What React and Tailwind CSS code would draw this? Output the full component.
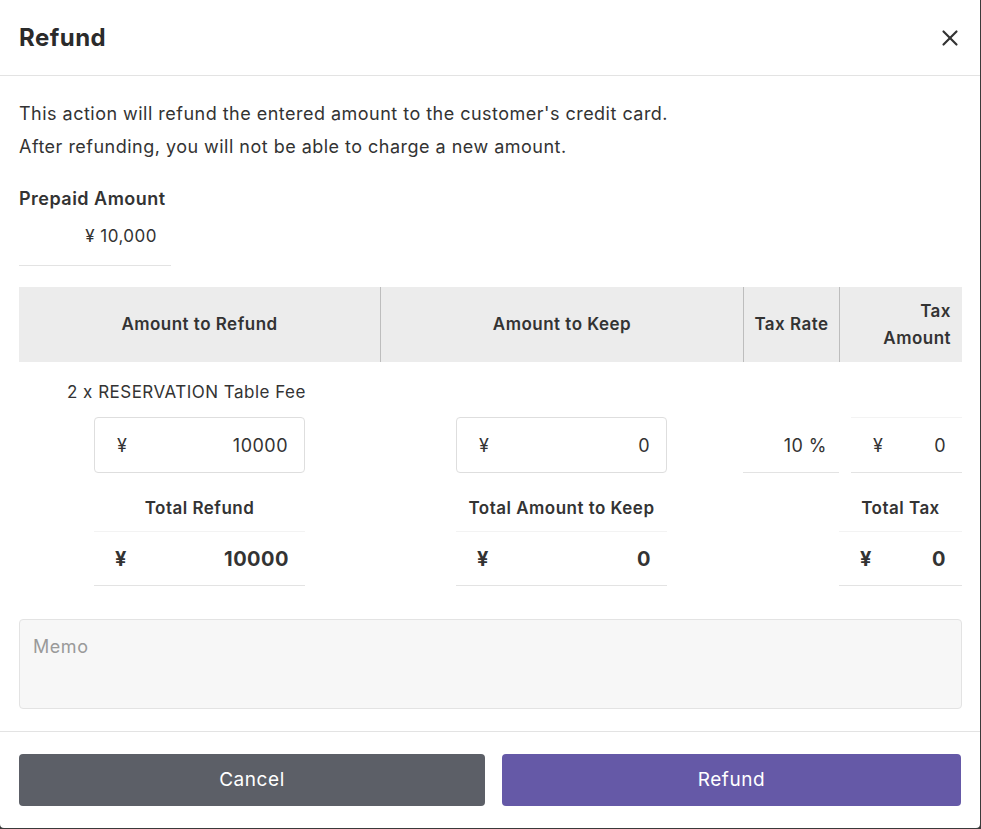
import { X } from 'lucide-react';

const Yen = ({ bold }) => (
    <span className={bold ? 'font-bold text-[20px]' : 'text-[18px]'}>¥</span>
);

export default function App() {
    return (
        <div className="h-[829px] w-[981px] bg-[#3a3a3a] font-['Inter',sans-serif] tracking-[0.03em] text-[#333]">
            <div className="flex h-[828px] w-[980px] flex-col rounded-b-[4px] bg-white">
                {/* Header */}
                <div className="flex h-[76px] shrink-0 items-center justify-between border-b border-[#e3e3e3] pl-[19px] pr-[17px] pt-[1px]">
                    <h1 className="text-[24px] font-bold text-[#2b2b2b]">Refund</h1>
                    <X className="h-[26px] w-[26px] text-[#333]" strokeWidth={2} />
                </div>

                {/* Body */}
                <div className="flex-1 px-[19px] pt-[21px]">
                    <p className="text-[18px] leading-[33px]">
                        This action will refund the entered amount to the customer's credit card.
                        <br />
                        After refunding, you will not be able to charge a new amount.
                    </p>

                    <div className="mt-[23px] text-[18px] font-semibold leading-[26px]">Prepaid Amount</div>
                    <div className="flex h-[54px] w-[152px] items-center justify-end border-b border-[#e3e3e3] pb-[3px] pr-[14px] text-[17px]">
                        ¥ 10,000
                    </div>

                    {/* Table */}
                    <div className="mt-[21px] grid grid-cols-[361px_363px_96px_123px]">
                        <div className="flex h-[75px] items-center justify-center bg-[#ececec] text-[17px] font-semibold">Amount to Refund</div>
                        <div className="flex h-[75px] items-center justify-center border-l border-[#bdbdbd] bg-[#ececec] text-[17px] font-semibold">Amount to Keep</div>
                        <div className="flex h-[75px] items-center justify-center border-l border-[#bdbdbd] bg-[#ececec] text-[17px] font-semibold">Tax Rate</div>
                        <div className="flex h-[75px] items-center justify-end border-l border-[#bdbdbd] bg-[#ececec] pr-[11px] text-right text-[17px] font-semibold leading-[27px]">
                            Tax<br />Amount
                        </div>

                        {/* Item row */}
                        <div className="pt-[17px]">
                            <div className="pl-[48px] text-[17px] leading-[26px]">2 x RESERVATION Table Fee</div>
                            <div className="mx-auto mt-[12px] flex h-[56px] w-[211px] items-center justify-between rounded-[4px] border border-[#dedede] pl-[22px] pr-[16px] text-[18px]">
                                <Yen />
                                <span>10000</span>
                            </div>
                        </div>
                        <div className="flex items-end justify-center">
                            <div className="flex h-[56px] w-[211px] items-center justify-between rounded-[4px] border border-[#dedede] pl-[22px] pr-[16px] text-[18px]">
                                <Yen />
                                <span>0</span>
                            </div>
                        </div>
                        <div className="flex items-end">
                            <div className="flex h-[55px] w-full items-center justify-end border-b border-[#e3e3e3] pr-[12px] text-[18px]">10 %</div>
                        </div>
                        <div className="flex items-end pl-[12px]">
                            <div className="flex h-[56px] w-full items-center justify-between border-t border-b border-t-[#f3f3f3] border-b-[#e3e3e3] pl-[22px] pr-[16px] text-[18px]">
                                <Yen />
                                <span>0</span>
                            </div>
                        </div>

                        {/* Totals row */}
                        <div className="flex flex-col items-center">
                            <div className="mt-[22px] text-[17px] font-semibold leading-[26px]">Total Refund</div>
                            <div className="mt-[10px] flex h-[55px] w-[211px] items-center justify-between border-t border-b border-t-[#f3f3f3] border-b-[#e3e3e3] pl-[21px] pr-[16px] text-[20px] font-bold">
                                <Yen bold />
                                <span>10000</span>
                            </div>
                        </div>
                        <div className="flex flex-col items-center">
                            <div className="mt-[22px] text-[17px] font-semibold leading-[26px]">Total Amount to Keep</div>
                            <div className="mt-[10px] flex h-[55px] w-[211px] items-center justify-between border-t border-b border-t-[#f3f3f3] border-b-[#e3e3e3] pl-[21px] pr-[16px] text-[20px] font-bold">
                                <Yen bold />
                                <span>0</span>
                            </div>
                        </div>
                        <div />
                        <div className="flex flex-col items-center">
                            <div className="mt-[22px] text-[17px] font-semibold leading-[26px]">Total Tax</div>
                            <div className="mt-[10px] flex h-[55px] w-full items-center justify-between border-t border-b border-t-[#f3f3f3] border-b-[#e3e3e3] pl-[21px] pr-[16px] text-[20px] font-bold">
                                <Yen bold />
                                <span>0</span>
                            </div>
                        </div>
                    </div>

                    {/* Memo */}
                    <textarea
                        placeholder="Memo"
                        className="mt-[33px] block h-[90px] w-[943px] resize-none rounded-[4px] border border-[#e3e3e3] bg-[#f7f7f7] px-[13px] py-[14px] text-[18px] leading-[26px] tracking-[0.03em] placeholder:text-[#9a9a9a] focus:outline-none"
                    />
                </div>

                {/* Footer */}
                <div className="mt-[22px] flex shrink-0 gap-[17px] border-t border-[#e3e3e3] px-[19px] pb-[22px] pt-[22px]">
                    <button className="h-[52px] w-[466px] rounded-[4px] bg-[#5c5f67] text-[19px] tracking-[0.03em] text-white">Cancel</button>
                    <button className="h-[52px] w-[459px] rounded-[4px] bg-[#6559a7] text-[19px] tracking-[0.03em] text-white">Refund</button>
                </div>
            </div>
        </div>
    );
}
